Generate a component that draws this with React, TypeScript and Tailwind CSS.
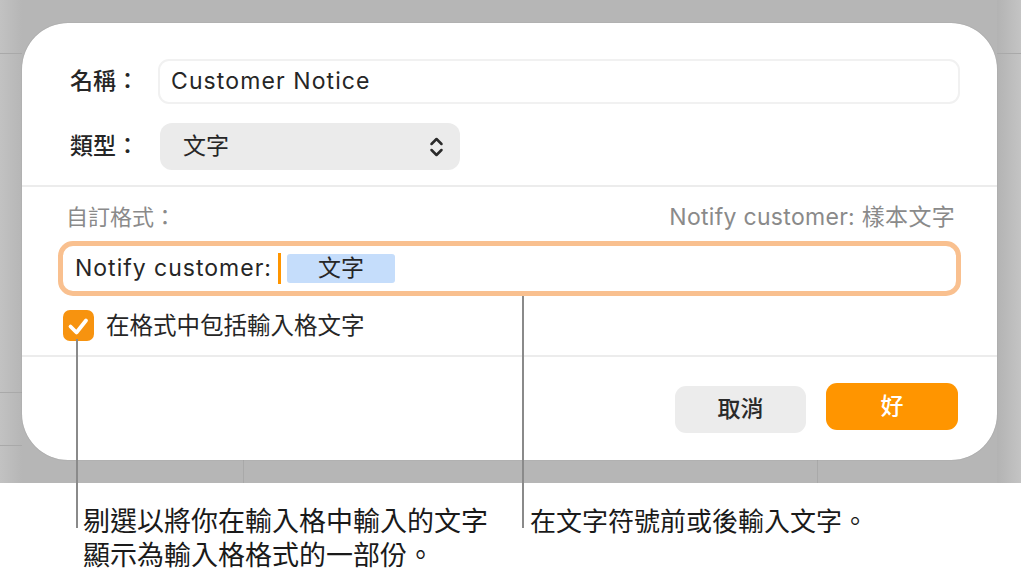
import React from 'react';

const font = { fontFamily: '"Inter", "Noto Sans CJK TC", sans-serif' };

const Chevrons = () => (
  <svg width="15" height="22" viewBox="0 0 15 22" fill="none" stroke="#2a2a2a" strokeWidth="2.5" strokeLinecap="round" strokeLinejoin="round">
    <path d="M2.5 8 L7.5 3 L12.5 8" />
    <path d="M2.5 14 L7.5 19 L12.5 14" />
  </svg>
);

const Check = () => (
  <svg width="31" height="31" viewBox="0 0 31 31" fill="none" stroke="white" strokeWidth="3.8" strokeLinecap="round" strokeLinejoin="round">
    <path d="M7.5 16.5 L13.5 22.5 L23 10.5" />
  </svg>
);

export default function App() {
  return (
    <div className="relative w-[1021px] h-[583px] overflow-hidden bg-white text-[#262626]" style={font}>
      {/* backdrop */}
      <div className="relative h-[483px] bg-[#b6b6b6] pt-[23px] pl-[22px]">
        <div className="absolute left-0 top-0 w-[22px] h-full bg-gradient-to-r from-[#c2c2c2] to-[#b6b6b6]" />
        <div className="absolute right-0 top-0 w-[24px] h-full bg-gradient-to-r from-[#b3b3b3] to-[#c4c4c4]" />
        <div className="absolute left-0 top-[53px] w-[22px] h-px bg-[#a9a9a9]" />
        <div className="absolute left-0 top-[392px] w-[22px] h-px bg-[#a9a9a9]" />
        <div className="absolute left-0 top-[445px] w-[22px] h-px bg-[#a9a9a9]" />
        <div className="absolute right-0 top-[53px] w-[24px] h-px bg-[#a9a9a9]" />
        <div className="absolute left-[243px] top-[460px] w-px h-[23px] bg-[#a9a9a9]" />
        <div className="absolute left-[817px] top-[460px] w-px h-[23px] bg-[#a9a9a9]" />

        {/* dialog */}
        <div className="relative w-[975px] h-[437px] bg-white rounded-[46px] shadow-[0_0_1px_rgba(0,0,0,0.3)]">
          <div className="px-[48px] pt-[36px]">
            <div className="flex items-center h-[45px]">
              <div className="w-[88px] text-[23px] font-medium">名稱：</div>
              <div className="flex-1 h-[45px] rounded-[11px] border-2 border-[#f1f1f1] flex items-center pl-[11px] mr-[-11px] text-[23px] tracking-[1.1px]">
                Customer Notice
              </div>
            </div>
            <div className="flex items-center h-[47px] mt-[19px]">
              <div className="w-[90px] text-[23px] font-medium">類型：</div>
              <div className="w-[300px] h-[47px] rounded-[12px] bg-[#ebebeb] flex items-center justify-between pl-[23px] pr-[16px] text-[23px]">
                <span>文字</span>
                <Chevrons />
              </div>
            </div>
          </div>

          <div className="mt-[15px] h-[2px] bg-[#ececec]" />

          <div className="pl-[44px] pr-[42px] pt-[16px]">
            <div className="flex justify-between items-center h-[28px] text-[#8a8a8a]">
              <span className="text-[22px]">自訂格式：</span>
              <span className="text-[23px] tracking-[0.3px]">Notify customer: 樣本文字</span>
            </div>
          </div>

          <div className="ml-[36px] mt-[10px] w-[903px] h-[55px] rounded-[15px] border-[5px] border-[#f9c08f] flex items-center pl-[12px] text-[23px]">
            <span className="tracking-[1px]">Notify customer:</span>
            <span className="ml-[6px] w-[3px] h-[31px] bg-[#ff9500]" />
            <span className="ml-[6px] w-[108px] h-[29px] bg-[#c5ddfb] rounded-[3px] flex items-center justify-center">文字</span>
          </div>

          <div className="ml-[41px] mt-[14px] flex items-center h-[31px]">
            <div className="w-[31px] h-[31px] rounded-[7px] bg-[#f7930f] flex items-center justify-center">
              <Check />
            </div>
            <span className="ml-[12px] text-[23.5px]">在格式中包括輸入格文字</span>
          </div>

          <div className="mt-[14px] h-[2px] bg-[#ececec]" />

          <div className="flex justify-end items-start gap-[20px] pr-[39px] pt-[26px]">
            <button className="mt-[3px] w-[131px] h-[47px] rounded-[11px] bg-[#ececec] text-[23px] font-medium text-[#2a2a2a]">取消</button>
            <button className="w-[132px] h-[47px] rounded-[11px] bg-[#ff9500] text-[23px] font-medium text-white">好</button>
          </div>
        </div>
      </div>

      {/* captions */}
      <div className="flex pt-[22px] pl-[83px] text-[27px] leading-[34px] text-[#1a1a1a]">
        <div className="w-[447px]">
          剔選以將你在輸入格中輸入的文字
          <br />
          顯示為輸入格格式的一部份。
        </div>
        <div className="text-[26px]">在文字符號前或後輸入文字。</div>
      </div>

      {/* callout lines */}
      <div className="absolute left-[76px] top-[339px] w-[2px] h-[189px] bg-[#8a8a8a]" />
      <div className="absolute left-[522px] top-[296px] w-[2px] h-[232px] bg-[#8a8a8a]" />
    </div>
  );
}
